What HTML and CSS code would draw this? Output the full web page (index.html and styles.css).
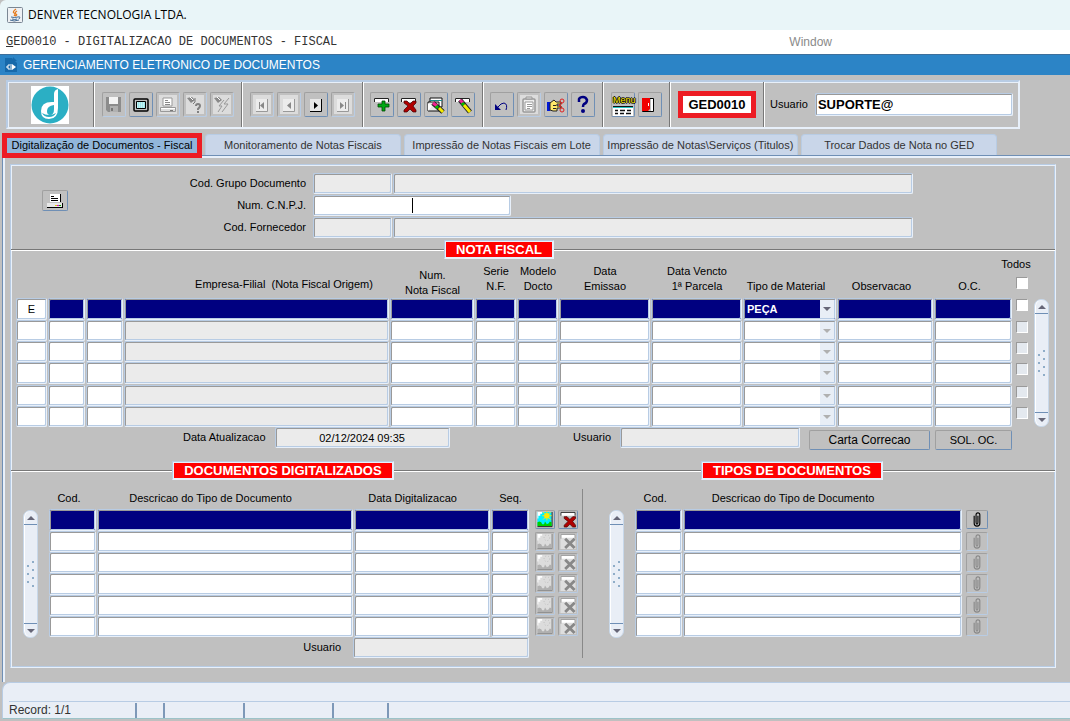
FILE: index.html
```html
<!DOCTYPE html>
<html lang="pt-BR">
<head>
    <meta charset="UTF-8">
    <meta name="viewport" content="width=device-width, initial-scale=1.0">
    <title>DENVER TECNOLOGIA LTDA.</title>
    <link rel="stylesheet" href="styles.css">
</head>
<body>

    <!-- Icons used more than once -->
    <svg class="sprite" aria-hidden="true">
        <symbol id="i-delete" viewBox="0 0 18 18">
            <path d="M1 1h16v4H1z" fill="#fff"/>
            <path d="M1.500 5V1.500H16.500V5" fill="none" stroke="#222"/>
            <path d="M5 6h3l3 3 3-3h3v2l-3 3 3 4v2h-3l-3-3-3 3H5v-2l4-4-4-3z" fill="#b00000" stroke="#400000" stroke-width=".7"/>
        </symbol>
        <symbol id="i-delete-off" viewBox="0 0 18 18">
            <path d="M1 1h16v16H1z" fill="#dedede"/>
            <path d="M2 2h14v3H2z" fill="#fff"/>
            <path d="M1.500 6V1.500H16.500V6" fill="none" stroke="#999"/>
            <path d="M6 6l10 10M16 6L6 16" stroke="#888" stroke-width="3"/>
        </symbol>
        <symbol id="i-image" viewBox="0 0 18 18">
            <path d="M1 1h15v15H1z" fill="#00f0ff"/>
            <path d="M16.500 1v15.500H1" fill="none" stroke="#222"/>
            <path d="M1 12l2-1 2 1 1 2 2 0 1-3 2 3 2-1 1-2 2 1v4H1z" fill="#00d000"/>
            <path d="M1 1h5v2H4v2H2v3H1z" fill="#fff"/>
            <circle cx="11" cy="5" r="3" fill="#ffe900"/>
            <path d="M11 0v2M11 8v2M6 5h2M14 5h2M7 1l2 2M15 1l-2 2M7 9l2-2M15 9l-2-2" stroke="#ffe900"/>
        </symbol>
        <symbol id="i-image-off" viewBox="0 0 18 18">
            <path d="M1 1h15v15H1z" fill="#dcdcdc"/>
            <path d="M16.500 1v15.500H1" fill="none" stroke="#8a8a8a"/>
            <path d="M1 12l2-1 2 1 1 2 2 0 1-3 2 3 2-1 1-2 2 1v4H1z" fill="#b0b0b0"/>
            <path d="M1 1h5v2H4v2H2v3H1z" fill="#fff"/>
            <circle cx="11" cy="5" r="3" fill="none" stroke="#bbb" stroke-dasharray="1 2"/>
        </symbol>
        <symbol id="i-clip" viewBox="0 0 18 18">
            <path d="M6 5v8q0 3 3 3t3-3V4q0-2-2-2T8 4v8q0 2 1 2t1-2V5" fill="none" stroke="currentColor" stroke-width="1.200"/>
        </symbol>
    </svg>

    <!-- Window title -->
    <header class="titlebar">
        <svg class="java" viewBox="0 0 16 16">
            <rect x=".5" y=".5" width="15" height="15" rx="1" fill="#eef1f4" stroke="#7b8794"/>
            <path d="M9 2q-4 3-2 4t0 3M10 4q-3 2-1 3t-1 2" fill="none" stroke="#e57b1e" stroke-width="1.200"/>
            <path d="M4 10q3 1 7 0M5 12q3 1 5 0M3 13q4 2 9 0M11 10q3-1 1 2" fill="none" stroke="#456c94"/>
        </svg>
        <span>DENVER TECNOLOGIA LTDA.</span>
    </header>

    <nav class="menubar">
        <span class="menu-program"><u>G</u>ED0010 - DIGITALIZACAO DE DOCUMENTOS - FISCAL</span>
        <span class="menu-window">Window</span>
    </nav>

    <div class="form-title">
        <svg viewBox="0 0 12 16">
            <path d="M0 1h7l5 5v9H0z" fill="#1769aa"/>
            <path d="M8 0l4 4H8z" fill="#1769aa"/>
            <path d="M5 8H3v4h2M1 10h2M6 7v6" stroke="#fff" fill="none"/>
            <path d="M7 7l4 3-4 3z" fill="#fff"/>
        </svg>
        <h1>GERENCIAMENTO ELETRONICO DE DOCUMENTOS</h1>
    </div>

    <!-- Toolbar -->
    <div class="toolbar">
        <div class="logo">
            <svg viewBox="0 0 38 38">
                <path d="M0 0h38v38H0z" fill="#fff"/>
                <circle cx="19" cy="19" r="18.500" fill="#2bafc4"/>
                <path d="M27 3q-4 1-4 5v8q-13-1-13 9 0 8 8 8 9 0 9-11zM23 19v4q0 6-4 6-3 0-3-4 0-5 7-6z" fill="#fff" fill-rule="evenodd"/>
                <path d="M11 27q2 4 7 4 5 0 7-4-3 2-7 2-4 0-7-2z" fill="#2bafc4"/>
            </svg>
        </div>
        <div class="tool-group">
            <button class="tool" disabled aria-label="Salvar">
                <svg viewBox="0 0 20 20"><path d="M2 2h15v15H4l-2-2z" fill="#8c8c8c"/><path d="M5 2h9v7H5z" fill="#f4f4f4"/><path d="M6 11h8v6H6z" fill="#b0b0b0"/><path d="M7 13h2v3H7z" fill="#777"/></svg>
            </button>
            <button class="tool" aria-label="Tela">
                <svg viewBox="0 0 20 20"><rect x="3" y="4" width="14" height="12" rx="1" fill="#c0c0c0" stroke="#000" stroke-width="1.500"/><path d="M5.500 6.500h9v7h-9z" fill="#9fe6ea" stroke="#000"/><path d="M6 8h8M6 10h8M6 12h8" stroke="#e8ffff" stroke-dasharray="1 1"/></svg>
            </button>
            <button class="tool off" disabled aria-label="Imprimir">
                <svg viewBox="0 0 20 20"><path d="M5 3h9v8H5z" fill="#fff" stroke="#999"/><path d="M7 5.500h3M7 7.500h5M7 9.500h5" stroke="#888"/><path d="M2.500 12.500h15v4h-15z" fill="#ddd" stroke="#999"/><path d="M3 13.500h14" stroke="#fff"/><path d="M12 15.500h3" stroke="#777"/></svg>
            </button>
            <button class="tool off" disabled aria-label="Entrar consulta">
                <svg viewBox="0 0 20 20"><path d="M2 3l5-1 3 3-4 3z" fill="#888"/><path d="M5 2l3 4M10 3v4l-2 2" fill="none" stroke="#777"/><path d="M5 2l3 3" stroke="#fff"/><path d="M11 11q0-2 2-2t2 2q0 1-2 3v1" fill="none" stroke="#808080" stroke-width="2"/><path d="M12 16h2v2h-2z" fill="#808080"/></svg>
            </button>
            <button class="tool off" disabled aria-label="Executar consulta">
                <svg viewBox="0 0 20 20"><path d="M2 3l5-1 3 3-4 3z" fill="#888"/><path d="M5 2l3 3" stroke="#fff"/><path d="M12 5l-5 6h3l-4 6M17 3l-5 6h4l-6 8" fill="none" stroke="#999"/></svg>
            </button>
        </div>
        <div class="tool-group">
            <button class="tool off" disabled aria-label="Primeiro">
                <svg viewBox="0 0 20 20"><path d="M4 4h12v12H4z" fill="#ececec"/><path d="M15.500 4v12.500H4" fill="none" stroke="#999"/><path d="M7.500 7v7" stroke="#888"/><path d="M12 7v7l-4-3.500z" fill="#888"/></svg>
            </button>
            <button class="tool off" disabled aria-label="Anterior">
                <svg viewBox="0 0 20 20"><path d="M4 4h12v12H4z" fill="#ececec"/><path d="M15.500 4v12.500H4" fill="none" stroke="#999"/><path d="M12 7v7l-4-3.500z" fill="#888"/></svg>
            </button>
            <button class="tool" aria-label="Proximo">
                <svg viewBox="0 0 20 20"><path d="M4 4h12v12H4z" fill="#e8e8e8"/><path d="M15.500 4v12.500H4" fill="none" stroke="#000"/><path d="M8 7v7l4-3.500z" fill="#000"/></svg>
            </button>
            <button class="tool off" disabled aria-label="Ultimo">
                <svg viewBox="0 0 20 20"><path d="M4 4h12v12H4z" fill="#ececec"/><path d="M15.500 4v12.500H4" fill="none" stroke="#999"/><path d="M7 7v7l4-3.500z" fill="#888"/><path d="M12.500 7v7" stroke="#888"/></svg>
            </button>
        </div>
        <div class="tool-group tight">
            <button class="tool" aria-label="Inserir">
                <svg viewBox="0 0 20 20"><path d="M2 3h15v4H2z" fill="#fff"/><path d="M2.500 7V3.500H16.500V7" fill="none" stroke="#222"/><path d="M10 6h3v3h4v3h-4v4h-3v-4H6V9h4z" fill="#00a814" stroke="#014a01" stroke-width=".8"/></svg>
            </button>
            <button class="tool" aria-label="Remover">
                <svg viewBox="0 0 20 20"><path d="M2 3h15v4H2z" fill="#fff"/><path d="M2.500 7V3.500H16.500V7" fill="none" stroke="#222"/><path d="M5 6h3l3 3 3-3h3v2l-3 3 3 4v2h-3l-3-3-3 3H5v-2l4-4-4-3z" fill="#b00000" stroke="#400000" stroke-width=".7"/></svg>
            </button>
            <button class="tool" aria-label="Limpar bloco">
                <svg viewBox="0 0 20 20"><path d="M4 3h12v9H4z" fill="#fff" stroke="#111"/><path d="M4 5.500h12" stroke="#1a8c8c"/><path d="M2 7h11v9H2z" fill="#e8e8e8" stroke="#111"/><path d="M2 8l4 3-4 5z" fill="#fff"/><path d="M7 8l10 9" stroke="#222" stroke-width="5"/><path d="M7 8l4 3" stroke="#f02090" stroke-width="3"/><path d="M10 11l2 2" stroke="#00c000" stroke-width="3"/><path d="M13 13l4 4" stroke="#f5ea00" stroke-width="3"/></svg>
            </button>
            <button class="tool" aria-label="Limpar registro">
                <svg viewBox="0 0 20 20"><path d="M2 3h15v4H2z" fill="#fff"/><path d="M2.500 7V3.500H16.500V7" fill="none" stroke="#222"/><path d="M7 5l10 12" stroke="#222" stroke-width="5"/><path d="M7 5l3 3" stroke="#f02090" stroke-width="3"/><path d="M9 8l2 2" stroke="#00c000" stroke-width="3"/><path d="M11 10l6 7" stroke="#f5ea00" stroke-width="3"/></svg>
            </button>
        </div>
        <div class="tool-group tight">
            <button class="tool" aria-label="Desfazer">
                <svg viewBox="0 0 20 20"><path d="M6 12q3-4 6-4 4 1 2 7" fill="none" stroke="#000080"/><path d="M3 9v6h6z" fill="#000080"/></svg>
            </button>
            <button class="tool off" disabled aria-label="Lista">
                <svg viewBox="0 0 20 20"><rect x="4" y="4" width="12" height="13" rx="1" fill="#eee" stroke="#999" stroke-width="1.500"/><path d="M7 4V2h6v2z" fill="#ddd" stroke="#999"/><path d="M6 7h8v8H6z" fill="#fff" stroke="#999"/><path d="M8 9.500h5M8 11.500h5M8 13.500h3" stroke="#999"/></svg>
            </button>
            <button class="tool" aria-label="Editar">
                <svg viewBox="0 0 20 20"><path d="M1 7h3v9H1z" fill="#0018d8"/><path d="M4 8l4-3 2 2h5v2h-4v2h4v2h-4v3H7l-3-1z" fill="#ffe96a" stroke="#222"/><path d="M7 10.500h3M7 13.500h3" stroke="#222"/><circle cx="16" cy="6" r="2" fill="none" stroke="#e02020"/><circle cx="16" cy="15" r="2" fill="none" stroke="#e02020"/><path d="M13 12l3-4M13 9l3 4" stroke="#e02020"/></svg>
            </button>
            <button class="tool" aria-label="Ajuda">
                <svg viewBox="0 0 20 20"><path d="M6 7V4q1-2 4-2t4 3q0 3-3 4-1 1-1 3" fill="none" stroke="#000080" stroke-width="2.500"/><circle cx="10" cy="16" r="2" fill="#000080"/></svg>
            </button>
        </div>
        <div class="tool-group">
            <button class="tool tool-menu" aria-label="Menu">
                <span>Menu</span>
                <svg viewBox="0 0 20 10"><path d="M0 0h20v10H0z" fill="#fff"/><path d="M0 .5h20" stroke="#111"/><path d="M0 1.500h20" stroke="#21c4c4"/><path d="M2 4.500h3M7 4.500h5M14 4.500h4M2 7.500h3M7 7.500h4M13 7.500h5" stroke="#111" stroke-width="1.500"/></svg>
            </button>
            <button class="tool" aria-label="Sair">
                <svg viewBox="0 0 20 20"><path d="M2.500 3.500h11v13h-11z" fill="#c0c0c0" stroke="#000"/><path d="M11 4h2v12h-2z" fill="#fff"/><path d="M2 3h8v11l-2 2H2z" fill="#f00000"/><path d="M8.500 8v3" stroke="#fff"/></svg>
            </button>
        </div>
        <div class="tool-group">
            <strong class="program-code">GED0010</strong>
        </div>
        <div class="tool-group user-group">
            <label for="usuario">Usuario</label>
            <input id="usuario" class="field" type="text" value="SUPORTE@">
        </div>
    </div>

    <!-- Tabs -->
    <div class="tabs" role="tablist">
        <button class="tab active" role="tab">Digitalização de Documentos - Fiscal</button>
        <button class="tab" role="tab">Monitoramento de Notas Fiscais</button>
        <button class="tab" role="tab">Impressão de Notas Fiscais em Lote</button>
        <button class="tab" role="tab">Impressão de Notas\Serviços (Titulos)</button>
        <button class="tab" role="tab">Trocar Dados de Nota no GED</button>
    </div>

    <main class="canvas">
        <div class="panel">

            <!-- Filters -->
            <div class="filters">
                <div class="filter-print">
                    <button class="print-btn" aria-label="Imprimir">
                        <svg viewBox="0 0 18 16"><path d="M4 1h10v8H4z" fill="#fff"/><path d="M5 3.500h3M5 5.500h7M5 7.500h7M14.500 1v8" stroke="#000"/><path d="M1 10h15v4H1z" fill="#e8e8e8"/><path d="M1 14.500h16M16.500 10v5" stroke="#000"/><path d="M9 12.500h2" stroke="#e0d000"/><path d="M11 12.500h2" stroke="#d0c"/><path d="M13 12.500h2" stroke="#0a0"/></svg>
                    </button>
                </div>
                <div class="filter-rows">
                    <div class="filter-row">
                        <label for="grupo">Cod. Grupo Documento</label>
                        <input id="grupo" class="field readonly code" type="text" readonly>
                        <input class="field readonly name" type="text" readonly aria-label="Grupo Documento">
                    </div>
                    <div class="filter-row">
                        <label for="cnpj">Num. C.N.P.J.</label>
                        <div class="cnpj">
                            <input id="cnpj" class="field" type="text">
                            <span class="caret"></span>
                        </div>
                    </div>
                    <div class="filter-row">
                        <label for="fornecedor">Cod. Fornecedor</label>
                        <input id="fornecedor" class="field readonly code" type="text" readonly>
                        <input class="field readonly name" type="text" readonly aria-label="Fornecedor">
                    </div>
                </div>
            </div>

            <!-- Nota fiscal -->
            <div class="section">
                <i class="rule nf-left"></i>
                <h2>NOTA FISCAL</h2>
                <i class="rule nf-right"></i>
            </div>
            <div class="notas">
                <table class="grid">
                    <colgroup>
                        <col class="w32"><col class="w38"><col class="w38"><col><col class="w85"><col class="w42"><col class="w42">
                        <col class="w92"><col class="w92"><col class="w94"><col class="w97"><col class="w79"><col class="w16">
                    </colgroup>
                    <thead>
                        <tr>
                            <th></th><th></th><th></th>
                            <th class="origin">Empresa-Filial &nbsp;(Nota Fiscal Origem)</th>
                            <th class="low">Num.<br>Nota Fiscal</th>
                            <th>Serie<br>N.F.</th>
                            <th>Modelo<br>Docto</th>
                            <th>Data<br>Emissao</th>
                            <th>Data Vencto<br>1ª Parcela</th>
                            <th class="narrow">Tipo de Material</th>
                            <th class="narrow">Observacao</th>
                            <th class="narrow">O.C.</th>
                            <th class="todos"><label for="todos">Todos</label><input id="todos" class="check" type="checkbox"></th>
                        </tr>
                    </thead>
                    <tbody id="notas"></tbody>
                </table>
                <div class="scroll"><button class="up" aria-label="Acima"></button><i class="grip"></i><button class="down" aria-label="Abaixo"></button></div>
            </div>
            <div class="notas-footer">
                <label for="atualizacao">Data Atualizacao</label>
                <input id="atualizacao" class="field readonly date" type="text" value="02/12/2024 09:35" readonly>
                <label for="usuario-nf" class="push">Usuario</label>
                <input id="usuario-nf" class="field readonly user" type="text" readonly>
                <button class="btn btn-carta">Carta Correcao</button>
                <button class="btn btn-sol">SOL. OC.</button>
            </div>

            <!-- Documentos -->
            <div class="section">
                <i class="rule doc-left"></i>
                <h2>DOCUMENTOS DIGITALIZADOS</h2>
                <i class="rule doc-middle"></i>
                <h2>TIPOS DE DOCUMENTOS</h2>
                <i class="rule doc-right"></i>
            </div>
            <div class="documents">
                <div class="pane pane-docs">
                    <div class="scroll"><button class="up" aria-label="Acima"></button><i class="grip"></i><button class="down" aria-label="Abaixo"></button></div>
                    <div class="pane-body">
                        <table class="grid">
                            <colgroup><col class="w48"><col><col class="w137"><col class="w39"><col class="w28"><col class="w21"></colgroup>
                            <thead>
                                <tr>
                                    <th class="narrow">Cod.</th>
                                    <th class="descr">Descricao do Tipo de Documento</th>
                                    <th class="digit">Data Digitalizacao</th>
                                    <th>Seq.</th><th></th><th></th>
                                </tr>
                            </thead>
                            <tbody id="docs"></tbody>
                        </table>
                        <div class="docs-footer">
                            <label for="usuario-doc">Usuario</label>
                            <input id="usuario-doc" class="field readonly" type="text" readonly>
                        </div>
                    </div>
                </div>
                <div class="pane pane-types">
                    <div class="scroll"><button class="up" aria-label="Acima"></button><i class="grip"></i><button class="down" aria-label="Abaixo"></button></div>
                    <div class="pane-body">
                        <table class="grid">
                            <colgroup><col class="w48"><col><col class="w25"></colgroup>
                            <thead>
                                <tr>
                                    <th class="narrow">Cod.</th>
                                    <th class="descr-type">Descricao do Tipo de Documento</th>
                                    <th></th>
                                </tr>
                            </thead>
                            <tbody id="types"></tbody>
                        </table>
                    </div>
                </div>
            </div>
        </div>
    </main>

    <!-- Status bar -->
    <footer class="status">
        <div class="message"></div>
        <div class="cells">
            <span class="record">Record: 1/1</span>
            <span class="s28"></span>
            <span class="s80"></span>
            <span class="s89"></span>
            <span class="s55"></span>
            <span></span>
        </div>
    </footer>

    <script src="script.js"></script>
</body>
</html>
```

FILE: styles.css
```css
/* General */
*, *::before, *::after {
    box-sizing: border-box;
}

body {
    margin: 0;
    background: #c0c0c0;
    color: #000;
    font-family: "Liberation Sans", Arial, sans-serif;
    font-size: 11px;
    line-height: 15px;
}

button, input, select {
    margin: 0;
    padding: 0;
    border: 0;
    border-radius: 0;
    font: inherit;
    color: inherit;
}

svg {
    display: block;
}

.sprite {
    position: absolute;
    width: 0;
    height: 0;
}

/* Title and menu */
.titlebar {
    display: flex;
    align-items: center;
    gap: 5px;
    height: 30px;
    padding: 0 0 1px 7px;
    background: #e9f5f8;
    border-top-left-radius: 6px;
    font-family: "Open Sans", "Noto Sans", sans-serif;
    font-size: 12px;
}

.java {
    width: 16px;
    height: 16px;
}

.menubar {
    display: flex;
    align-items: center;
    justify-content: space-between;
    height: 24px;
    padding: 0 238px 0 6px;
    background: #fff;
}

.menu-program {
    color: #333;
    font-family: "Liberation Mono", "Courier New", monospace;
    font-size: 12px;
}

.menu-window {
    color: #8a8a8a;
    font-size: 12px;
}

.form-title {
    display: flex;
    align-items: center;
    gap: 6px;
    height: 21px;
    padding-left: 5px;
    border-top: 1px solid #3d6f9b;
    background: #2c84c6;
    color: #fff;
}

.form-title svg {
    width: 12px;
    height: 16px;
}

.form-title h1 {
    margin: 0;
    font-size: 12px;
    font-weight: normal;
}

/* Fields */
.field {
    display: block;
    width: 100%;
    height: 21px;
    padding: 0 4px;
    border: 1px solid;
    border-color: #b8cce4 #e8f0fa #e8f0fa #b8cce4;
    border-radius: 2px;
    outline: none;
    box-shadow: inset 1px 1px #999, inset -1px -1px #b8cce4;
    background: #fff;
}

.readonly {
    background: #ebebeb;
}

/* Toolbar */
.toolbar {
    display: flex;
    height: 49px;
    margin: 5px 50px 0 6px;
    border: 2px solid;
    border-color: #b8cce4 #e8f0fa #e8f0fa #b8cce4;
    box-shadow: inset 1px 1px #e8f0fa;
}

.logo {
    display: flex;
    align-items: center;
    justify-content: center;
    width: 85px;
    padding-right: 2px;
}

.logo svg {
    width: 38px;
    height: 38px;
}

.tool-group {
    display: flex;
    align-items: center;
    gap: 3px;
    padding: 0 7px;
    border-left: 1px solid #777;
    box-shadow: inset 1px 0 #fff;
}

.tool-group:not(.tight) {
    padding: 0 7px 0 8px;
}

.tool {
    width: 24px;
    height: 25px;
    padding: 1px;
    border: 1px solid;
    border-color: #a0a0a0 #6f8fb5 #6f8fb5 #a0a0a0;
    border-radius: 2px;
    background: #c0c0c0;
}

.tool svg {
    width: 20px;
    height: 20px;
}

.tool:disabled {
    border-color: #a0a0a0 #b8cce4 #b8cce4 #a0a0a0;
}

.tool.off {
    box-shadow: inset 0 0 0 2px #c0c0c0;
    background: #dcdcdc;
}

.tool-menu span {
    display: block;
    height: 12px;
    color: #ffee00;
    font-size: 9px;
    line-height: 12px;
    text-shadow: 1px 0 #000, -1px 0 #000, 0 1px #000, 0 -1px #000;
}

.tool-menu svg {
    height: 10px;
}

.program-code {
    width: 78px;
    border: 5px solid #ed1c24;
    background: #fff;
    font-size: 13px;
    line-height: 17px;
    text-align: center;
}

.user-group {
    flex: 1;
    gap: 7px;
}

.tool-group.user-group {
    padding: 0 5px 0 6px;
}

.user-group .field {
    flex: 1;
    height: 23px;
    padding: 0 2px;
    font-size: 13px;
    font-weight: bold;
}

/* Tabs */
.tabs {
    display: flex;
    align-items: flex-end;
    gap: 3px;
    margin: 4px 73px 0 2px;
}

.tab {
    flex: 1;
    height: 21px;
    margin-bottom: 3px;
    border: 1px solid #b8cce4;
    border-bottom: 0;
    border-radius: 4px 4px 0 0;
    background: #c9d6e9;
    color: #333;
    white-space: nowrap;
}

.tab.active {
    flex: none;
    width: 200px;
    height: 25px;
    margin-bottom: 0;
    border: 5px solid #ed1c24;
    border-radius: 0;
    background: #92b6da;
    color: #000;
    line-height: 15px;
    z-index: 1;
}

/* Canvas */
.canvas {
    margin: -3px 0 0 2px;
    padding: 8px 14px 14px 5px;
    border-left: 1px solid #6f8fb5;
    border-top: 1px solid #6f8fb5;
    box-shadow: inset 2px 2px #e8f0fa;
}

.panel {
    margin-left: 2px;
    padding-bottom: 9px;
    border: 1px solid;
    border-color: #b8cce4 #e8f0fa #e8f0fa #b8cce4;
    box-shadow: inset 1px 1px #e8f0fa, inset -1px -1px #b8cce4;
}

/* Filters */
.filters {
    display: flex;
    padding: 8px 142px 2px 1px;
}

.filter-print {
    width: 164px;
    padding: 17px 0 0 30px;
}

.print-btn {
    width: 26px;
    height: 21px;
    padding: 1px 3px;
    border: 1px solid;
    border-color: #a0a0a0 #6f8fb5 #6f8fb5 #a0a0a0;
    border-radius: 2px;
    background: #c0c0c0;
}

.print-btn svg {
    width: 18px;
    height: 16px;
}

.filter-rows {
    display: flex;
    flex: 1;
    flex-direction: column;
    gap: 1px;
}

.filter-row {
    display: flex;
    align-items: center;
    gap: 1px;
}

.filter-row label {
    width: 130px;
    margin-right: 6px;
    text-align: right;
}

.filter-row .code {
    width: 79px;
}

.filter-row .name {
    flex: 1;
}

.cnpj {
    position: relative;
    width: 198px;
}

.caret {
    position: absolute;
    top: 3px;
    left: 50%;
    width: 1px;
    height: 15px;
    background: #000;
}

/* Section titles */
.section {
    display: flex;
    align-items: center;
}

.section h2 {
    margin: 0;
    padding: 0 11px;
    border: 1px solid;
    border-color: #b8cce4 #e8f0fa #e8f0fa #b8cce4;
    box-shadow: inset 0 0 0 1px #e8f0fa;
    background: #f00;
    color: #fff;
    font-size: 13px;
    line-height: 17px;
}

.rule {
    height: 2px;
    border-top: 1px solid #777;
    background: #fff;
}

.nf-left { flex: 433; }
.nf-right { flex: 501; }
.doc-left { flex: 162; }
.doc-middle { flex: 309; }
.doc-right { flex: 173; }

/* Grids */
.grid {
    width: 100%;
    border-collapse: collapse;
    table-layout: fixed;
}

.grid th {
    height: 39px;
    padding: 0 0 4px;
    font-weight: normal;
    vertical-align: bottom;
    white-space: nowrap;
}

.grid th.low {
    padding-bottom: 0;
}

.grid th.origin {
    padding: 0 0 6px 54px;
}

.grid th.narrow {
    padding-right: 8px;
}

.grid th.todos {
    padding-bottom: 9px;
}

.todos label {
    display: flex;
    justify-content: center;
    margin: 0 -10px 0 -20px;
    line-height: 10px;
}

.grid td {
    height: 21px;
    padding: 0 1px 0 0;
    vertical-align: top;
}

.grid tr:nth-child(3n+1) td,
.grid tr:nth-child(3n+1) .field {
    height: 22px;
}

.grid .current .field {
    background: #000080;
    color: #fff;
}

.grid .current .kind {
    background: #fff;
    color: #000;
}

.kind {
    text-align: center;
}

.w16 { width: 16px; }
.w21 { width: 21px; }
.w25 { width: 25px; }
.w28 { width: 28px; }
.w32 { width: 32px; }
.w38 { width: 38px; }
.w39 { width: 39px; }
.w42 { width: 42px; }
.w48 { width: 48px; }
.w79 { width: 79px; }
.w85 { width: 85px; }
.w92 { width: 92px; }
.w94 { width: 94px; }
.w97 { width: 97px; }
.w137 { width: 137px; }

/* Drop-down */
.combo {
    position: relative;
}

.combo select {
    appearance: none;
    padding: 0 3px;
    opacity: 1;
    font-weight: bold;
}

.combo::before {
    content: "";
    position: absolute;
    top: 2px;
    right: 2px;
    bottom: 2px;
    width: 14px;
    background: #e8eef6;
    pointer-events: none;
}

.combo::after {
    content: "";
    position: absolute;
    top: 9px;
    right: 5px;
    border: 4px solid transparent;
    border-top-color: #b0b0b0;
    border-bottom: 0;
    pointer-events: none;
}

.current .combo::after {
    border-top-color: #667;
}

/* Tick box */
.check {
    appearance: none;
    display: block;
    width: 12px;
    height: 12px;
    margin: 1px 0 0 3px;
    border: 1px solid;
    border-color: #999 #fff #fff #999;
    background: #fff;
}

.check:disabled {
    background: #e4e9ef;
}

.todos .check {
    margin-top: 8px;
}

/* Scroll bar */
.scroll {
    display: flex;
    flex: none;
    flex-direction: column;
    align-items: center;
    justify-content: space-between;
    width: 15px;
    height: 128px;
    border: 1px solid #c8d8ea;
    border-radius: 7px;
    background: #e9eef6;
    box-shadow: inset 1px 0 #fff;
}

.up, .down {
    width: 13px;
    height: 14px;
    background: none;
}

.up {
    border-bottom: 1px solid #6f8fb5;
}

.down {
    border-top: 1px solid #6f8fb5;
}

.up::before, .down::before {
    content: "";
    display: block;
    width: 8px;
    margin: 0 auto;
    border: 4px solid transparent;
}

.up::before {
    border-top: 0;
    border-bottom-color: #667;
}

.down::before {
    border-bottom: 0;
    border-top-color: #667;
}

.grip {
    width: 8px;
    height: 28px;
    background:
        radial-gradient(circle at 1px 6px, #8fadc8 1px, transparent 1px) 0 0 / 8px 8px,
        radial-gradient(circle at 6px 2px, #8fadc8 1px, transparent 1px) 0 0 / 8px 8px;
}

/* Nota fiscal */
.notas {
    display: flex;
    gap: 5px;
    padding: 0 6px 0 5px;
}

.notas .scroll {
    margin-top: 40px;
}

.notas-footer {
    display: flex;
    align-items: flex-start;
    gap: 9px;
    padding: 0 43px 11px 172px;
}

.notas-footer label {
    margin-top: 3px;
}

.notas-footer .date {
    width: 175px;
    text-align: center;
}

.notas-footer .user {
    width: 180px;
}

.notas-footer .push {
    margin-left: auto;
}

.btn {
    height: 20px;
    margin-top: 3px;
    border: 1px solid;
    border-color: #a0a0a0 #6f8fb5 #6f8fb5 #a0a0a0;
    border-radius: 2px;
    background: #c0c0c0;
}

.btn-carta {
    width: 121px;
    font-size: 12px;
}

.btn-sol {
    width: 77px;
    margin-left: -4px;
}

/* Documents */
.documents {
    display: flex;
}

.documents .grid th {
    height: 29px;
    padding-bottom: 3px;
}

.pane {
    display: flex;
    gap: 11px;
}

.pane .scroll {
    margin-top: 30px;
}

.pane-docs {
    width: 54.8%;
    padding: 0 4px 0 12px;
    background: linear-gradient(#888, #888) right bottom / 1px 169px no-repeat;
}

.pane-types {
    flex: 1;
    padding: 0 67px 0 26px;
}

.pane-body {
    flex: 1;
}

.documents .grid th.descr {
    padding-right: 30px;
}

.documents .grid th.descr-type {
    padding-right: 60px;
}

.documents .grid th.digit {
    padding-right: 20px;
}

.docs-footer {
    display: flex;
    align-items: center;
    justify-content: flex-end;
    gap: 12px;
    margin-right: 50px;
}

.docs-footer .field {
    width: 176px;
}

.row-btn {
    display: block;
    width: 20px;
    height: 19px;
    margin: 1px 0 0;
    border: 1px solid;
    border-color: #a0a0a0 #b8cce4 #b8cce4 #a0a0a0;
    border-radius: 2px;
    background: #c0c0c0;
}

.row-btn svg {
    width: 18px;
    height: 17px;
    margin: 0 auto;
}

.row-btn.image {
    margin-left: 5px;
}

.row-btn.clip {
    width: 22px;
    margin-left: 3px;
    color: #888;
}

.current .row-btn {
    border-color: #a0a0a0 #6f8fb5 #6f8fb5 #a0a0a0;
    color: #000;
}

/* Status bar */
.status {
    padding-left: 6px;
    border: 1px solid #b8cce4;
    border-right: 0;
    border-bottom-color: #9cc3c8;
    border-radius: 8px 0 0 0;
    margin-left: 2px;
    background: #e9eef6;
}

.message {
    height: 19px;
    border-bottom: 1px solid #b8cce4;
}

.cells {
    display: flex;
    height: 16px;
    padding-top: 1px;
    color: #333;
    font-size: 12px;
}

.cells span {
    border-right: 2px solid #7d98b8;
}

.cells span:last-child {
    border: 0;
}

.record { width: 128px; }
.s28 { width: 28px; }
.s80 { width: 80px; }
.s89 { width: 89px; }
.s55 { width: 55px; }
```

FILE: script.js
```javascript
const ROWS = 6;

function field(label, extra = "", value = "") {
    return `<td><input class="field ${extra}" type="text" value="${value}" aria-label="${label}"></td>`;
}

function icon(name) {
    return `<svg viewBox="0 0 18 18"><use href="#${name}"/></svg>`;
}

function fill(id, buildRow) {
    let html = "";
    for (let i = 0; i < ROWS; i++) {
        html += `<tr class="${i === 0 ? "current" : ""}">${buildRow(i === 0)}</tr>`;
    }
    document.getElementById(id).innerHTML = html;
}

fill("notas", current =>
    field("Tipo", "kind", current ? "E" : "") +
    field("Empresa") +
    field("Filial") +
    field("Nome", "readonly") +
    field("Num. Nota Fiscal") +
    field("Serie") +
    field("Modelo") +
    field("Data Emissao") +
    field("Data Vencto") +
    `<td><div class="combo"><select class="field" aria-label="Tipo de Material" ${current ? "" : "disabled"}>
        <option>${current ? "PEÇA" : ""}</option></select></div></td>` +
    field("Observacao") +
    field("O.C.") +
    `<td><input class="check" type="checkbox" aria-label="Selecionar" ${current ? "" : "disabled"}></td>`
);

fill("docs", current => {
    const off = current ? "" : "-off";
    const disabled = current ? "" : "disabled";
    return field("Cod.") +
        field("Descricao") +
        field("Data Digitalizacao") +
        field("Seq.") +
        `<td><button class="row-btn image" aria-label="Ver" ${disabled}>${icon("i-image" + off)}</button></td>` +
        `<td><button class="row-btn" aria-label="Excluir" ${disabled}>${icon("i-delete" + off)}</button></td>`;
});

fill("types", current =>
    field("Cod.") +
    field("Descricao") +
    `<td><button class="row-btn clip" aria-label="Anexar" ${current ? "" : "disabled"}>${icon("i-clip")}</button></td>`
);
```
